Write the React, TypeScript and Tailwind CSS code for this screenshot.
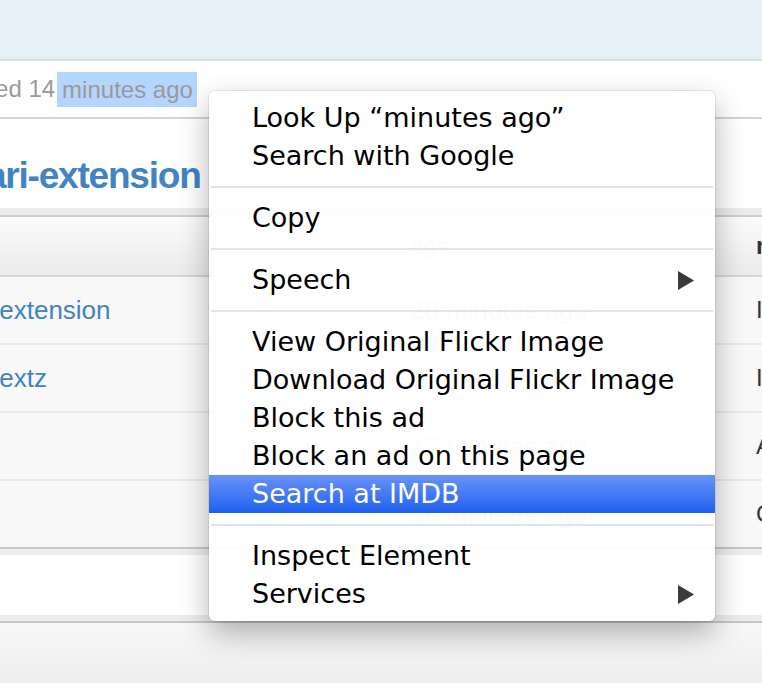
import React from "react";

type Item = { label: string; arrow?: boolean; active?: boolean };

const groups: Item[][] = [
  [{ label: "Look Up “minutes ago”" }, { label: "Search with Google" }],
  [{ label: "Copy" }],
  [{ label: "Speech", arrow: true }],
  [
    { label: "View Original Flickr Image" },
    { label: "Download Original Flickr Image" },
    { label: "Block this ad" },
    { label: "Block an ad on this page" },
    { label: "Search at IMDB", active: true },
  ],
  [{ label: "Inspect Element" }, { label: "Services", arrow: true }],
];

const rows = [
  { name: "safari-extension", age: "28 minutes ago", msg: "Initial commit" },
  { name: "safari-extz", age: "18 minutes ago", msg: "Initial import" },
  { name: "", age: "17 minutes ago", msg: "Added icons" },
  { name: "", age: "16 minutes ago", msg: "Changed manifest" },
];

function Arrow({ active }: { active?: boolean }) {
  return (
    <svg width="16" height="19" viewBox="0 0 16 19" className="shrink-0">
      <polygon points="0,0 16,9.5 0,19" fill={active ? "#ffffff" : "#3a3a3a"} />
    </svg>
  );
}

function ContextMenu() {
  return (
    <div className="absolute left-[209px] top-[91px] w-[506px] rounded-[6px] bg-white/[0.95] py-[8px] shadow-[0_12px_30px_rgba(0,0,0,0.3),0_0_0_1px_rgba(0,0,0,0.07)] font-['DejaVu_Sans',sans-serif] text-[27px] text-black">
      {groups.map((group, gi) => (
        <div key={gi}>
          {gi > 0 && (
            <div className="flex h-[24px] items-center px-[2px]">
              <div className="h-[2px] w-full bg-[#e4e4e4]" />
            </div>
          )}
          {group.map((item) => (
            <div
              key={item.label}
              className={
                item.active
                  ? "flex h-[38px] items-center justify-between bg-gradient-to-b from-[#6892f7] to-[#1d5ff0] pl-[43px] pr-[21px] leading-[38px] text-white"
                  : "flex h-[38px] items-center justify-between pl-[43px] pr-[21px] leading-[38px]"
              }
            >
              <span className="whitespace-nowrap">{item.label}</span>
              {item.arrow && <Arrow active={item.active} />}
            </div>
          ))}
        </div>
      ))}
    </div>
  );
}

export default function App() {
  return (
    <div className="relative h-[683px] w-[762px] overflow-hidden bg-white font-['Liberation_Sans',Arial,sans-serif]">
      <div className="h-[61px] border-b-2 border-[#d4e1ea] bg-[#e6f0f7]" />

      <div className="flex h-[58px] items-center border-b-2 border-[#cbd6de] whitespace-nowrap text-[24px] text-[#9a9a9a]">
        <span className="ml-[-69px] shrink-0">Updated 14</span>
        <span className="ml-[2px] inline-block h-[35px] shrink-0 bg-[#b4d5fd] pl-[5px] pr-[4px] leading-[35px]">
          minutes ago
        </span>
      </div>

      <div className="h-[89px] whitespace-nowrap pt-[35px]">
        <span className="ml-[-64px] text-[37px] font-bold leading-[44px] tracking-[-1.2px] text-[#4183c4]">
          safari-extension
        </span>
      </div>

      <div className="h-[7px] bg-[#ececec]" />
      <div className="flex h-[62px] items-center border-y-2 border-t-[#cccccc] border-b-[#d5d5d5] bg-gradient-to-b from-[#fbfbfb] to-[#ebebeb] whitespace-nowrap text-[24px]">
        <div className="w-[410px] shrink-0" />
        <div className="w-[346px] shrink-0 text-[#b4b4b4]">age</div>
        <div className="shrink-0 font-bold text-[#333333]">message</div>
      </div>

      {rows.map((r, i) => (
        <div
          key={i}
          className={
            i === rows.length - 1
              ? "flex h-[68px] items-center border-b-2 border-[#c8c8c8] bg-[#f8f8f8] whitespace-nowrap"
              : "flex h-[68px] items-center border-b-2 border-[#e9e9e9] bg-[#f8f8f8] whitespace-nowrap"
          }
        >
          <div className="w-[410px] shrink-0 overflow-hidden text-[26px] text-[#4183c4]">
            <span className="ml-[-73px] inline-block">{r.name}</span>
          </div>
          <div className="w-[346px] shrink-0 text-[26px] text-[#b4b4b4]">{r.age}</div>
          <div className="shrink-0 text-[24px] text-[#333333]">{r.msg}</div>
        </div>
      ))}

      <div className="h-[6px] bg-[#eeeeee]" />
      <div className="h-[60px] bg-white" />
      <div className="h-[8px] border-b-2 border-[#c6c6c6] bg-[#ececec]" />
      <div className="h-[60px] bg-gradient-to-b from-[#f8f8f8] to-[#eeeeee]" />

      <ContextMenu />
    </div>
  );
}
